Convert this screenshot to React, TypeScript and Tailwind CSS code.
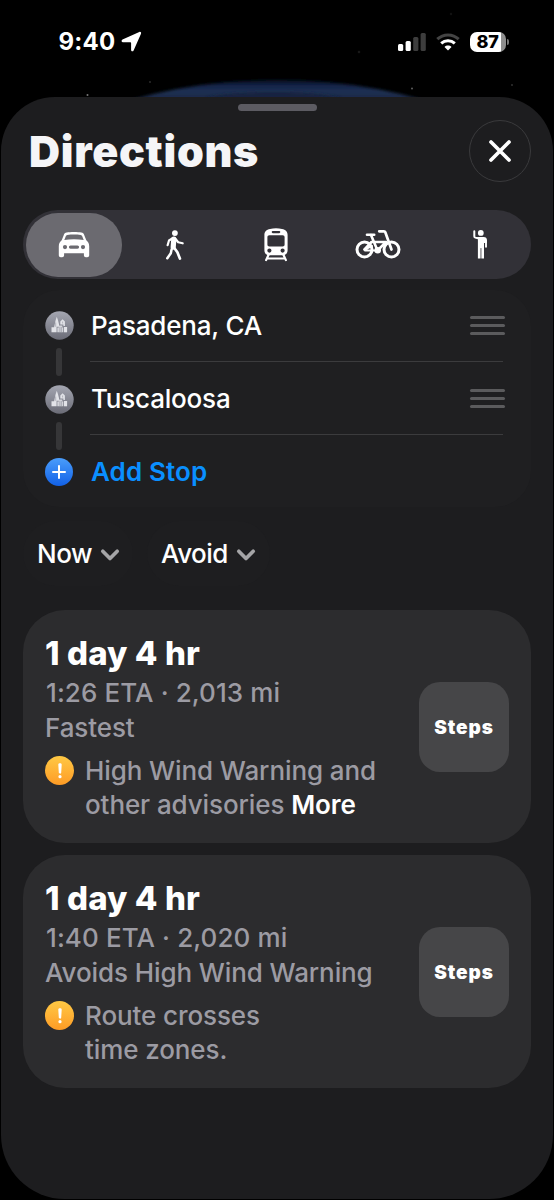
import { useState } from "react";
import type { ReactNode } from "react";

const CarIcon = () => (
    <svg className="w-[32px] h-[26px]" viewBox="0 0 32 26" fill="none">
        <path
            fillRule="evenodd"
            clipRule="evenodd"
            fill="#fff"
            d="M8.6 .6C10.5 .2 13 0 16 0s5.500 .2 7.400 .6c1.500 .3 2.300 1.100 2.900 2.600l2 5.100c1.800 1.600 2.900 3.200 2.900 6v8.900c0 1.200-.8 2-2 2h-1.300c-1.200 0-2-.8-2-2v-1.900H6.100v1.900c0 1.200-.8 2-2 2H2.800c-1.200 0-2-.8-2-2v-8.900c0-2.800 1.100-4.400 2.900-6l2-5.100C6.300 1.700 7.100 .9 8.600 .6ZM9.300 2.900c-.8 .1-1.200 .5-1.500 1.300L6.300 8c3-.5 6.200-.7 9.700-.7s6.700 .2 9.700 .7l-1.500-3.800c-.3-.8-.7-1.200-1.500-1.300-4-.6-9.400-.6-13.400 0ZM7 13a2.100 2.100 0 1 0 0 4.200A2.100 2.100 0 0 0 7 13Zm18 0a2.100 2.100 0 1 0 0 4.200A2.100 2.100 0 0 0 25 13Zm-12.500 .5a1.600 1.600 0 0 0 0 3.200h7a1.600 1.600 0 0 0 0-3.200h-7Z"
        />
    </svg>
);

const WalkIcon = () => (
    <svg className="w-[20px] h-[32px]" viewBox="0 0 20 32" fill="none" stroke="#fff" strokeLinecap="round" strokeLinejoin="round">
        <circle cx="9.900" cy="4.100" r="2.900" fill="#fff" stroke="none" />
        <path d="M8.800 10.200 8.200 18.100" strokeWidth="5.200" />
        <path d="M7.300 9.400 4 11.500 2.600 16.200" strokeWidth="2.200" />
        <path d="m10.600 10 2.600 3.200 4.500 1.100" strokeWidth="2.200" />
        <path d="m9.300 19 3.100 4.300 2.500 6.300" strokeWidth="2.700" />
        <path d="M6.600 20.400 5.800 24.200 2.300 29.300" strokeWidth="2.500" />
    </svg>
);

const TrainIcon = () => (
    <svg className="w-[26px] h-[34px]" viewBox="0 0 26 34" fill="none">
        <path
            fillRule="evenodd"
            clipRule="evenodd"
            fill="#fff"
            d="M7 .9C10.500 0 15.500 0 19 .9c3.600 .9 5.600 2.400 5.600 6.100v15c0 3.500-2 5.300-5.400 5.300H6.800c-3.400 0-5.400-1.800-5.400-5.300V7C1.400 3.300 3.400 1.800 7 .9ZM9.800 3a1.100 1.100 0 0 0 0 2.200h6.400a1.100 1.100 0 0 0 0-2.200H9.800ZM6.400 7.300c-1.300 0-2 .7-2 2v7.200c0 1.300 .7 2 2 2h13.200c1.300 0 2-.7 2-2V9.300c0-1.300-.7-2-2-2H6.400Zm0 13.200a2.100 2.100 0 1 0 0 4.200 2.100 2.100 0 0 0 0-4.200Zm13.200 0a2.100 2.100 0 1 0 0 4.200 2.100 2.100 0 0 0 0-4.200Z"
        />
        <path d="m5.700 26.500-2.600 5.600M20.300 26.500l2.600 5.600M5 30.500h16" stroke="#fff" strokeWidth="2.200" strokeLinecap="round" />
    </svg>
);

const BikeIcon = () => (
    <svg className="w-[46px] h-[31px]" viewBox="0 0 46 31" fill="none" stroke="#fff" strokeWidth="3" strokeLinecap="round" strokeLinejoin="round">
        <circle cx="9.500" cy="20.500" r="7.500" />
        <circle cx="36.500" cy="20.500" r="7.500" />
        <path d="M9.500 20.500 16.500 13H31L22.500 21.500 16 6" strokeWidth="2.600" />
        <path d="M12 5.800h7.200" strokeWidth="2.600" />
        <path d="M24.200 2.300h4.700c.7 0 1.200 .3 1.400 1l6.200 17.200" strokeWidth="2.700" />
        <path d="M9.500 20.500 17 17M10 21.500h12" strokeWidth="2" />
        <circle cx="22.700" cy="21.300" r="3.300" fill="#fff" stroke="none" />
    </svg>
);

const HailIcon = () => (
    <svg className="w-[18px] h-[31px] ml-[2px]" viewBox="0 0 18 31" fill="none" stroke="#fff" strokeLinecap="round" strokeLinejoin="round">
        <circle cx="9.800" cy="3.900" r="2.900" fill="#fff" stroke="none" />
        <path d="M3.300 2.300v4.900c0 .8 .3 1.200 1 1.400L8 9.500" strokeWidth="2" />
        <path d="M6 7.900h6.600c2.200 0 3.300 1.100 3.300 3.200v3H13v15.500H6.900V10Z" fill="#fff" stroke="none" />
        <path d="M15 11.500v6.200" strokeWidth="1.900" />
        <path d="M9.950 19.500v10.500" stroke="#323137" strokeWidth=".8" />
    </svg>
);

const CityBadge = () => (
    <svg className="w-[29px] h-[29px] shrink-0" viewBox="0 0 29 29">
        <defs>
            <linearGradient id="city" x1="0" y1="0" x2="0" y2="1">
                <stop stopColor="#a4a6b1" />
                <stop offset="1" stopColor="#6b6c77" />
            </linearGradient>
        </defs>
        <circle cx="14.500" cy="14.500" r="14.200" fill="url(#city)" />
        <g fill="#e2e3e8">
            <path d="M6.500 16.300h2.600l1.500-7 1.200-3.500 1.200 3.500 1 4v2.500h-2.400v5.500H6.500Z" />
            <path d="M15.300 10.500 17.600 8.200l2.300 2.300v4.600h-1.500v-1.700h-3.100Z" />
            <path d="M12.300 16.500h1.500v-2h3.500v2h1v4.800h-6Z" opacity=".85" />
            <path d="M19 16h3.100v5.300H19Z" />
        </g>
        <path d="M10.700 11.500v4.300M17.600 10.500v2M14.900 16v5.300M16.400 16v5.300" stroke="#92949e" strokeWidth=".6" />
    </svg>
);

const AddBadge = () => (
    <div className="w-[28px] h-[28px] shrink-0 rounded-full bg-linear-to-b from-[#4a9dfb] to-[#1260e6] flex items-center justify-center">
        <svg className="w-[14px] h-[14px]" viewBox="0 0 14 14" stroke="#fff" strokeWidth="2" strokeLinecap="round">
            <path d="M7 1v12M1 7h12" />
        </svg>
    </div>
);

const WarningBadge = () => (
    <div className="w-[29px] h-[29px] shrink-0 rounded-full bg-linear-to-b from-[#ffc944] to-[#fd9b25] flex items-center justify-center">
        <svg className="w-[6px] h-[16px]" viewBox="0 0 6 16" fill="#fff">
            <path d="M1.300 1.600C1.300 .6 2.100 .3 3 .3s1.700 .3 1.700 1.300L4.200 9.600c0 .8-.5 1.200-1.200 1.200s-1.200-.4-1.200-1.200Z" />
            <circle cx="3" cy="13.700" r="1.600" />
        </svg>
    </div>
);

const ChevronIcon = () => (
    <svg className="w-[20px] h-[14px] mt-[2px]" viewBox="0 0 20 14" fill="none" stroke="#a5a5a7" strokeWidth="3.700" strokeLinecap="round" strokeLinejoin="round">
        <path d="m2.800 3.200 7.200 7.300 7.200-7.300" />
    </svg>
);

const StatusBar = () => (
    <div className="relative h-[97px] shrink-0 overflow-hidden">
        {/* Earth limb and stars behind the sheet */}
        <svg className="absolute inset-0 w-[554px] h-[97px]" viewBox="0 0 554 97">
            <defs>
                <linearGradient id="limb" x1="0" y1="79" x2="0" y2="97" gradientUnits="userSpaceOnUse">
                    <stop stopColor="#050c1a" />
                    <stop offset=".4" stopColor="#13254a" />
                    <stop offset=".7" stopColor="#1f3052" />
                    <stop offset="1" stopColor="#1c2b48" />
                </linearGradient>
                <filter id="soft" x="-10%" y="-50%" width="120%" height="200%">
                    <feGaussianBlur stdDeviation="1.600" />
                </filter>
            </defs>
            <ellipse cx="277" cy="200" rx="265" ry="120" fill="url(#limb)" filter="url(#soft)" />
            <path d="M205 98c20-5 45-6 72-6s45 2 65 6Z" fill="#152440" filter="url(#soft)" />
            <g fill="#777">
                <circle cx="87.500" cy="95" r="1" />
                <circle cx="150" cy="82" r=".9" opacity=".4" />
                <circle cx="412" cy="88.500" r="1" opacity=".8" />
                <circle cx="512" cy="85" r="1" opacity=".4" />
                <circle cx="359" cy="52" r="1.300" opacity=".2" />
                <circle cx="451" cy="14" r="1.200" opacity=".15" />
            </g>
        </svg>
        <div className="relative flex items-center justify-between pt-[27px] pl-[58.500px] pr-[46.500px]">
            <div className="flex items-center gap-[6px]">
                <span className="text-[24px] leading-[29px] font-bold tracking-[0.2px]">9:40</span>
                <svg className="w-[21px] h-[21px]" viewBox="0 0 21 21" fill="#fff">
                    <path d="M1.500 8.500 18.300 1c1.200-.5 2.200 .4 1.700 1.700l-7.400 16.700c-.6 1.400-2.500 1.100-2.500-.5V12c0-.5-.2-.7-.7-.7H2C.4 11.300 0 9.200 1.500 8.500Z" />
                </svg>
            </div>
            <div className="flex items-center">
                <svg className="w-[28px] h-[18px] mr-[10px]" viewBox="0 0 28 18">
                    <rect x="0" y="11" width="5.200" height="7" rx="1.500" fill="#fff" />
                    <rect x="7.600" y="8" width="5.200" height="10" rx="1.500" fill="#fff" />
                    <rect x="15.200" y="4" width="5.200" height="14" rx="1.500" fill="#3d3d3d" />
                    <rect x="22.600" y="0" width="5.200" height="18" rx="1.500" fill="#3d3d3d" />
                </svg>
                <svg className="w-[24px] h-[18px] mr-[10px]" viewBox="0 0 24 18" fill="none" strokeWidth="3">
                    <path d="M1.300 6.200c6-5.700 15.400-5.700 21.400 0" stroke="#444" />
                    <path d="M5.200 10.300c3.900-3.500 9.700-3.500 13.600 0" stroke="#fff" />
                    <path d="M12 17.500 8.500 14c1.900-1.900 5.100-1.900 7 0Z" fill="#fff" />
                </svg>
                <div className="w-[36px] h-[20px] rounded-[7px] bg-linear-to-r from-white from-[86%] to-[#8f8f8f] to-[86%] flex items-center justify-center">
                    <span className="text-[18px] leading-[20px] font-extrabold text-black tracking-[-0.3px]">87</span>
                </div>
                <div className="w-[2px] h-[6px] ml-[1px] mr-[-1px] rounded-r-full bg-[#777]" />
            </div>
        </div>
    </div>
);

const modes = [
    { id: "drive", icon: <CarIcon /> },
    { id: "walk", icon: <WalkIcon /> },
    { id: "transit", icon: <TrainIcon /> },
    { id: "cycle", icon: <BikeIcon /> },
    { id: "ride", icon: <HailIcon /> },
];

const stops = ["Pasadena, CA", "Tuscaloosa"];

const Chip = ({ label, className }: { label: string; className: string }) => (
    <button className={`h-[65px] rounded-full bg-[#1e1e20] pl-[14px] flex items-center gap-[8px] ${className}`}>
        <span className="text-[26px] font-medium tracking-[-0.5px]">{label}</span>
        <ChevronIcon />
    </button>
);

interface RouteProps {
    eta: string;
    note: string;
    children: ReactNode;
}

const RouteCard = ({ eta, note, children }: RouteProps) => (
    <div className="h-[233px] rounded-[42px] bg-[#2c2c2e] pl-[22px] pr-[22px] flex items-center justify-between">
        <div className="h-full pt-[23px] text-[#9c9ba3] font-medium text-[26px] tracking-[-0.1px] whitespace-nowrap">
            <h2 className="text-[33px] leading-[40px] font-extrabold text-white tracking-[0.1px]">1 day 4 hr</h2>
            <p className="leading-[35px] mt-[2px] pl-[1px] tracking-[0.1px]">{eta}</p>
            <p className="leading-[35px]">{note}</p>
            <div className="flex gap-[11px] mt-[9px]">
                <div className="pt-[2px]">
                    <WarningBadge />
                </div>
                <p className="leading-[34px]">{children}</p>
            </div>
        </div>
        <button className="w-[90px] h-[90px] shrink-0 rounded-[21px] bg-[#464648] pt-[3px] text-[19px] font-black tracking-[0.9px]">
            Steps
        </button>
    </div>
);

const App = () => {
    const [mode, setMode] = useState("drive");

    return (
        <div className="w-[554px] h-[1200px] bg-black flex flex-col overflow-hidden text-white font-['Inter','Liberation_Sans',sans-serif]">
            <StatusBar />

            <main className="mx-px h-[1102px] rounded-t-[54px] rounded-b-[64px] bg-[#1d1d1f] px-[22px] pt-[7px] flex flex-col">
                <div className="w-[79px] h-[7px] rounded-full bg-[#5c5b62] mx-auto" />

                {/* Header */}
                <header className="flex items-center justify-between mt-[9px] pl-[6px]">
                    <h1 className="text-[43px] leading-[62px] font-black tracking-[0.700px] text-[#f5f5f7]">Directions</h1>
                    <button className="w-[62px] h-[62px] rounded-full border border-[#3a3a3c] flex items-center justify-center">
                        <svg className="w-[24px] h-[24px]" viewBox="0 0 24 24" stroke="#fff" strokeWidth="3.700" strokeLinecap="round">
                            <path d="m3 3 18 18M21 3 3 21" />
                        </svg>
                    </button>
                </header>

                {/* Transport modes */}
                <div className="mt-[28px] h-[69px] rounded-full bg-[#323137] pr-[1px] grid grid-cols-5 shrink-0">
                    {modes.map((m) => (
                        <button key={m.id} onClick={() => setMode(m.id)} className="flex items-center justify-center">
                            <span className={`w-[96px] h-[64px] rounded-full flex items-center justify-center ${mode === m.id ? "bg-[#6b6a70]" : ""}`}>
                                {m.icon}
                            </span>
                        </button>
                    ))}
                </div>

                {/* Stops */}
                <div className="mt-[11px] h-[217px] rounded-[36px] bg-[#1f1f21] pl-[22px] pr-[28px] flex shrink-0 text-[26px] font-medium tracking-[-0.2px]">
                    <div className="w-[28px] pt-[21px] flex flex-col items-center">
                        {stops.map((stop) => (
                            <div key={stop} className="h-[73.500px] flex flex-col items-center">
                                <CityBadge />
                                <div className="w-[6px] h-[28px] mt-[8px] rounded-full bg-[#363638]" />
                            </div>
                        ))}
                        <AddBadge />
                    </div>
                    <div className="flex-1 ml-[17px]">
                        {stops.map((stop, i) => (
                            <div
                                key={stop}
                                className={`flex items-center justify-between border-b border-[#3b3b3d] ${i === 0 ? "h-[72px]" : "h-[73px]"}`}
                            >
                                <span className="pl-[1px]">{stop}</span>
                                <span className="flex flex-col gap-[5px] mr-[-2px]">
                                    <span className="w-[35px] h-[3px] rounded-full bg-[#5b5b5d]" />
                                    <span className="w-[35px] h-[3px] rounded-full bg-[#5b5b5d]" />
                                    <span className="w-[35px] h-[3px] rounded-full bg-[#5b5b5d]" />
                                </span>
                            </div>
                        ))}
                        <div className="h-[73px] flex items-center pl-[1px] text-[#0a8fff] font-semibold tracking-[0.1px]">Add Stop</div>
                    </div>
                </div>

                {/* Filters */}
                <div className="mt-[14px] flex gap-[14px]">
                    <Chip label="Now" className="w-[110px]" />
                    <Chip label="Avoid" className="w-[123px]" />
                </div>

                {/* Routes */}
                <div className="mt-[24px] flex flex-col gap-[12px]">
                    <RouteCard eta="1:26 ETA · 2,013 mi" note="Fastest">
                        High Wind Warning and
                        <br />
                        other advisories <span className="text-white font-semibold">More</span>
                    </RouteCard>
                    <RouteCard eta="1:40 ETA · 2,020 mi" note="Avoids High Wind Warning">
                        Route crosses
                        <br />
                        time zones.
                    </RouteCard>
                </div>
            </main>
        </div>
    );
};

export default App;
